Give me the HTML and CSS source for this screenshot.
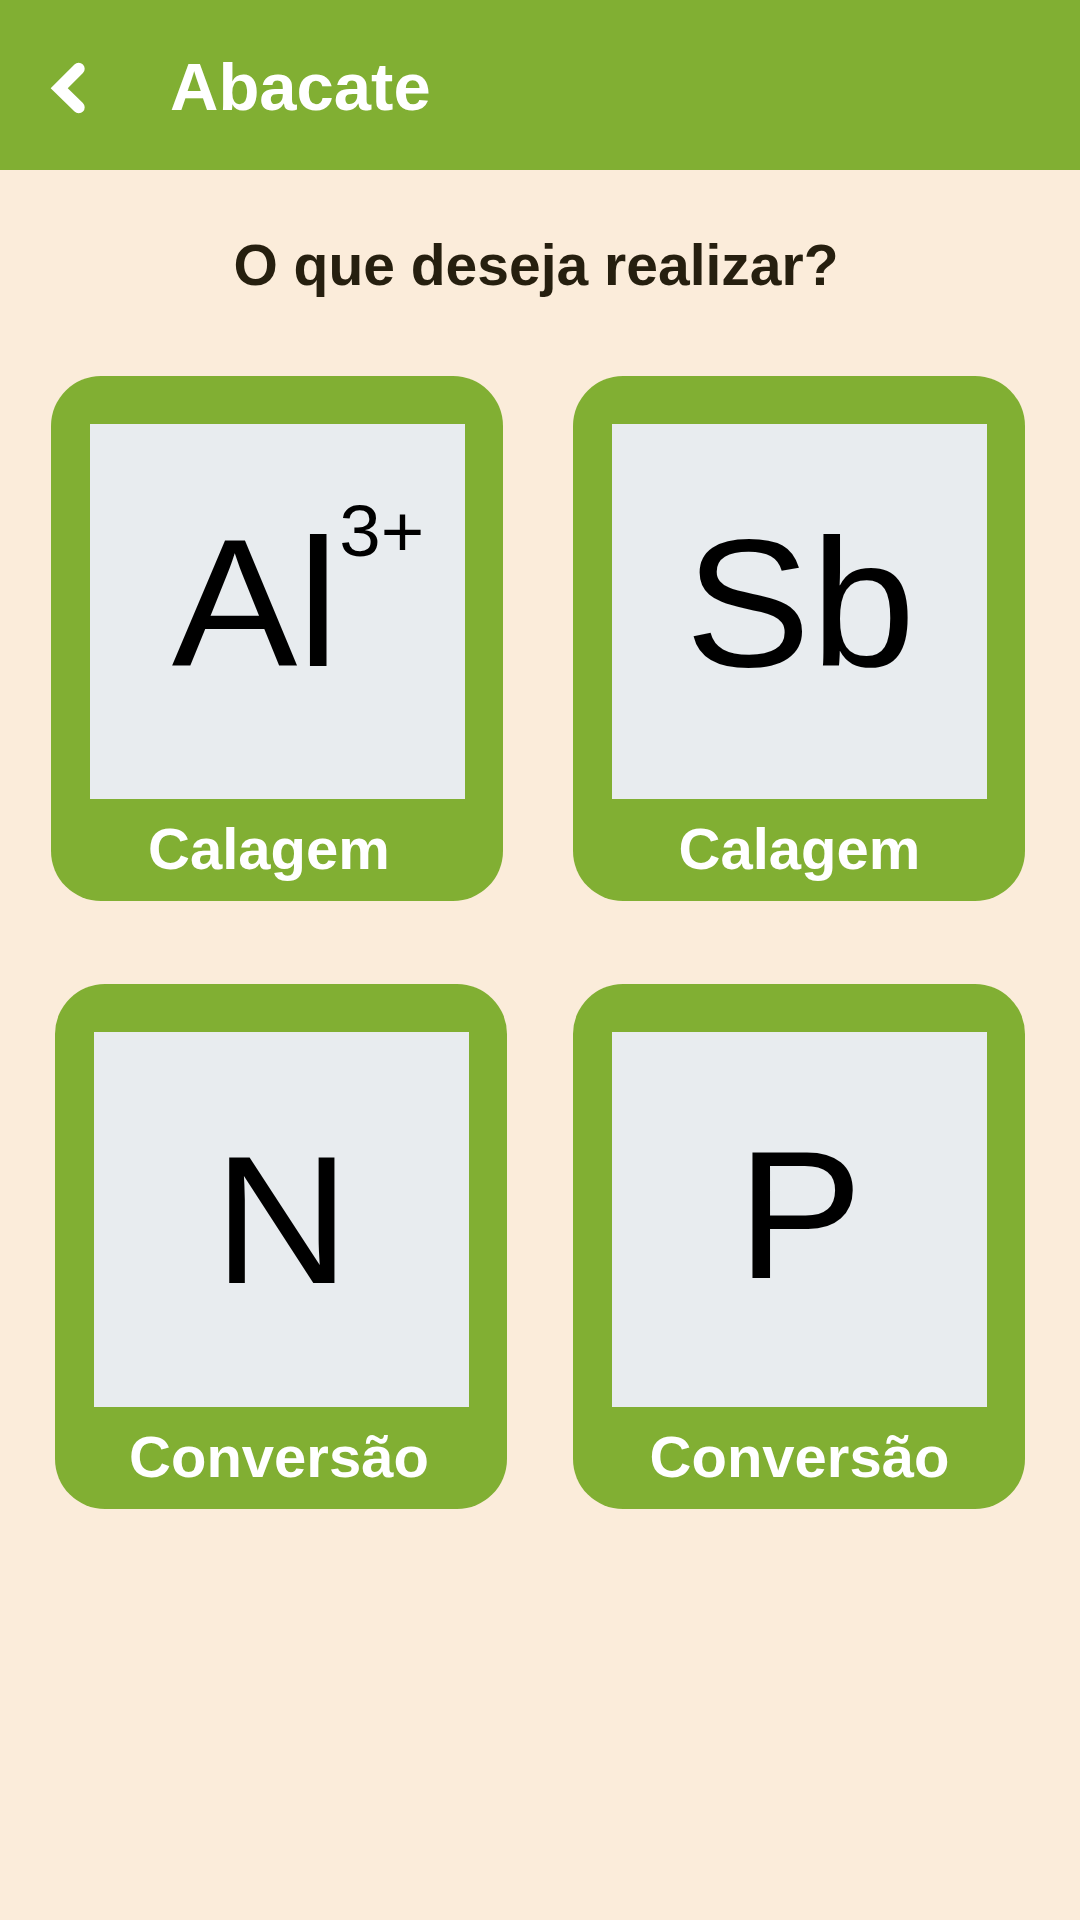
FILE: index.html
```html
<!DOCTYPE html>
<html lang="pt">
<head>
<meta charset="utf-8">
<title>Abacate</title>
<link rel="stylesheet" href="styles.css">
</head>
<body>
<header class="topbar">
  <svg class="back" width="48" height="60" viewBox="0 0 48 60" aria-hidden="true">
    <path d="M38.7 10.7 L19.2 30.3 L38.7 49.3" fill="none" stroke="#ffffff" stroke-width="12" stroke-linecap="round" stroke-linejoin="miter"/>
  </svg>
  <h1 class="title">Abacate</h1>
</header>
<main class="content">
  <h2 class="question">O que deseja realizar?</h2>
  <div class="grid">
    <div class="card">
      <div class="tile"><span class="sym sym-al">Al<span class="charge">3+</span></span></div>
      <div class="label label-shift">Calagem</div>
    </div>
    <div class="card">
      <div class="tile"><span class="sym sym-sb">Sb</span></div>
      <div class="label">Calagem</div>
    </div>
    <div class="card card-offset">
      <div class="tile"><span class="sym sym-n">N</span></div>
      <div class="label label-shift-sm">Conversão</div>
    </div>
    <div class="card">
      <div class="tile"><span class="sym sym-p">P</span></div>
      <div class="label">Conversão</div>
    </div>
  </div>
</main>
</body>
</html>
```
FILE: styles.css
```css
html, body {
  margin: 0;
  padding: 0;
}
body {
  width: 1080px;
  min-height: 1920px;
  background: #fbecda;
  font-family: "Liberation Sans", Arial, sans-serif;
}
.topbar {
  display: flex;
  align-items: flex-start;
  height: 170px;
  background: #81af33;
}
.back {
  display: block;
  margin-left: 40px;
  margin-top: 58px;
  flex: none;
}
.title {
  margin: 49px 0 0 82px;
  font-size: 67px;
  line-height: 75px;
  font-weight: 700;
  color: #ffffff;
}
.content {
  padding-top: 64px;
}
.question {
  margin: 0;
  padding-right: 8px;
  text-align: center;
  font-size: 57px;
  line-height: 63px;
  font-weight: 700;
  color: #261f0f;
}
.grid {
  display: grid;
  grid-template-columns: 452px 452px;
  column-gap: 70px;
  row-gap: 83px;
  padding-left: 51px;
  margin-top: 79px;
}
.card {
  box-sizing: border-box;
  width: 452px;
  height: 525px;
  background: #81af33;
  border-radius: 50px;
  padding: 48px 38px 0 39px;
}
.card-offset {
  margin-left: 4px;
}
.tile {
  height: 375px;
  background: #e8ecef;
  display: flex;
  align-items: center;
  justify-content: center;
  overflow: hidden;
}
.sym {
  display: inline-block;
  font-size: 182px;
  line-height: 182px;
  font-weight: 400;
  color: #000000;
  white-space: nowrap;
  transform: scaleX(1.035);
}
.charge {
  font-size: 72px;
  line-height: 0;
  vertical-align: 110px;
}
.sym-al {
  transform: translate(20px, -9px) scaleX(1.035);
}
.sym-sb {
  transform: translate(1px, -9px) scaleX(1.035);
}
.sym-p {
  transform: translateY(-5px) scaleX(1.035);
}
.label {
  box-sizing: border-box;
  height: 102px;
  padding-top: 17px;
  font-size: 58px;
  line-height: 65px;
  font-weight: 700;
  color: #ffffff;
  text-align: center;
}
.label-shift {
  padding-right: 17px;
}
.label-shift-sm {
  padding-right: 5px;
}
```
